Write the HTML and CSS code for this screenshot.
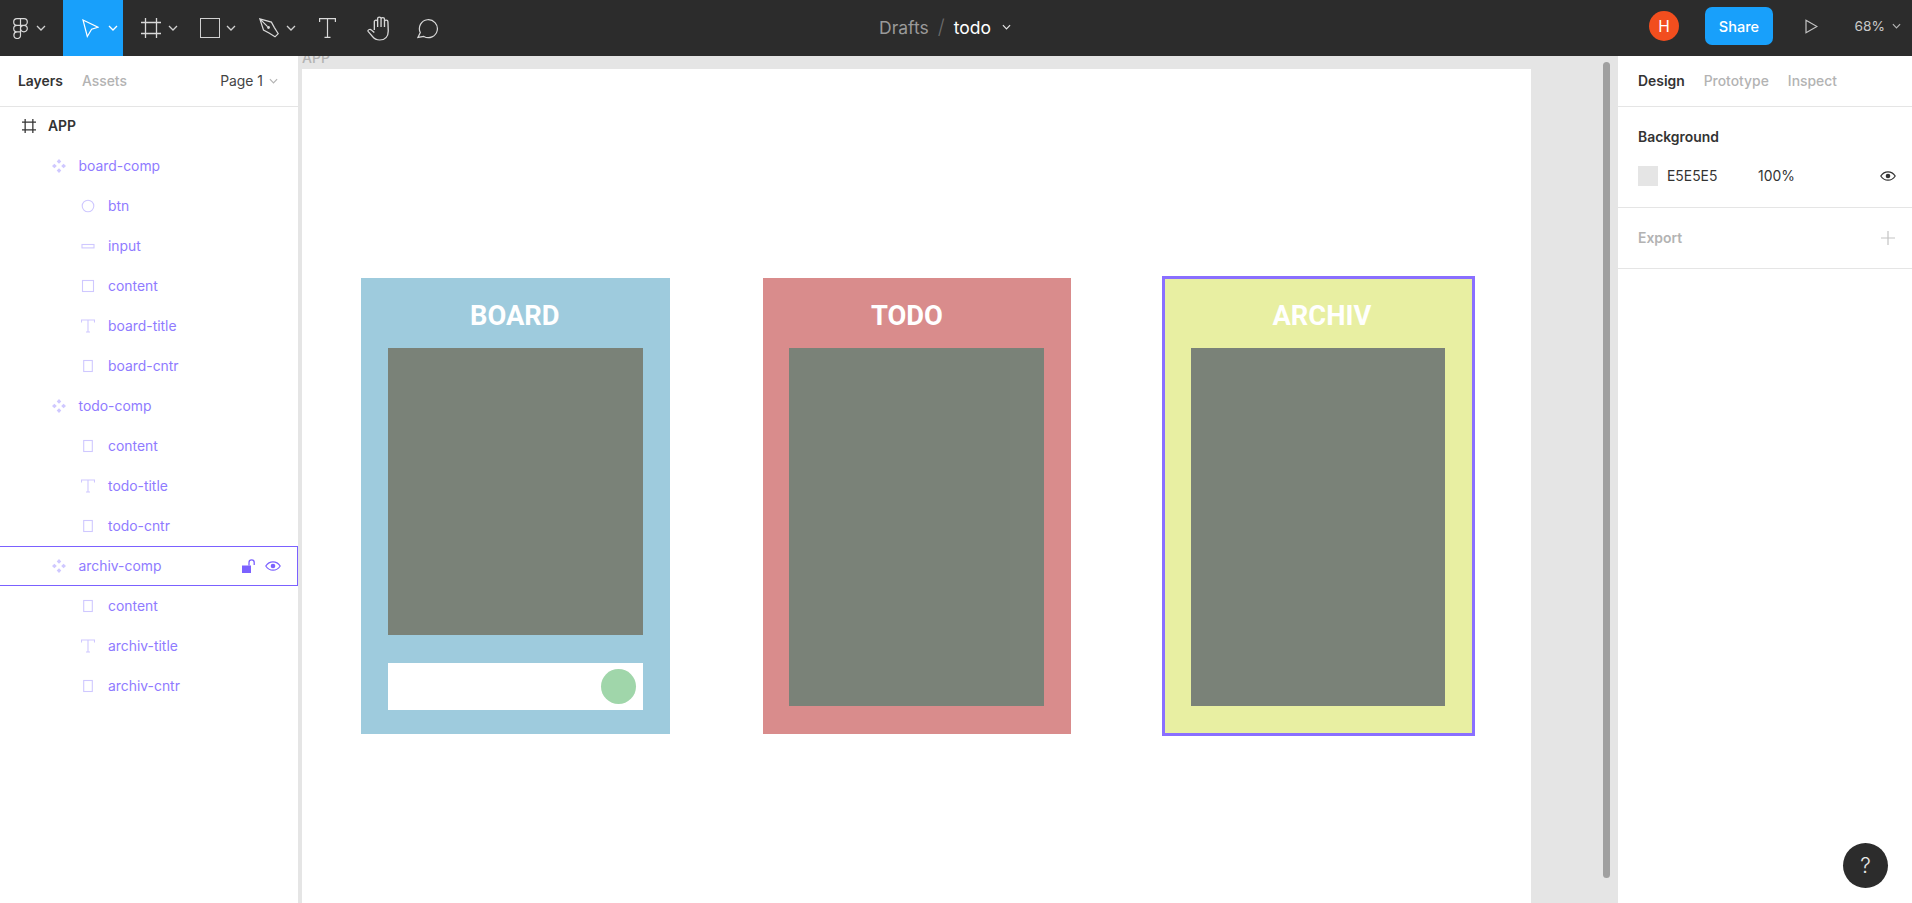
FILE: index.html
```html
<!DOCTYPE html>
<html lang="en">
<head>
<meta charset="utf-8">
<title>todo – Figma</title>
<link rel="stylesheet" href="styles.css">
</head>
<body>
<svg class="defs" width="0" height="0" aria-hidden="true">
  <defs>
    <symbol id="chev" viewBox="0 0 10 6"><path d="M1 1l4 4 4-4" fill="none" stroke="currentColor" stroke-width="1.3"/></symbol>
    <symbol id="i-frame" viewBox="0 0 20 20"><path d="M4.500 0v20M15.500 0v20M0 4.500h20M0 15.500h20" fill="none" stroke="currentColor"/></symbol>
    <symbol id="i-comp" viewBox="0 0 14 14"><path d="M7 0l2.300 2.400L7 4.800 4.700 2.400zM7 9.200l2.300 2.400L7 14l-2.300-2.400zM2.400 4.700L4.800 7 2.400 9.300 0 7zM11.600 4.700L14 7l-2.400 2.300L9.200 7z" fill="#cfc8ff"/></symbol>
    <symbol id="i-ellipse" viewBox="0 0 14 14"><circle cx="7" cy="7" r="5.800" fill="none" stroke="#cfc8ff" stroke-width="1.100"/></symbol>
    <symbol id="i-input" viewBox="0 0 14 14"><rect x="1" y="5.500" width="12" height="3.400" fill="none" stroke="#cfc8ff" stroke-width="1.100"/></symbol>
    <symbol id="i-rect" viewBox="0 0 14 14"><rect x="1.500" y="1.500" width="11" height="11" fill="none" stroke="#cfc8ff" stroke-width="1.100"/></symbol>
    <symbol id="i-tall" viewBox="0 0 14 14"><rect x="2.700" y="1.500" width="8.600" height="11" fill="none" stroke="#cfc8ff" stroke-width="1.100"/></symbol>
    <symbol id="i-text" viewBox="0 0 14 14"><path d="M.5 3.500V1h13v2.500M7 1v12M5 13h4" fill="none" stroke="#cfc8ff" stroke-width="1.100"/></symbol>
    <symbol id="i-eye" viewBox="0 0 16 10"><path d="M.8 5C2.600 2.200 5 .8 8 .8s5.400 1.400 7.200 4.200C13.400 7.800 11 9.200 8 9.200S2.600 7.800.8 5z" fill="none" stroke="currentColor" stroke-width="1.200"/><circle cx="8" cy="5" r="2.300" fill="currentColor"/></symbol>
  </defs>
</svg>
<div class="app">
  <header class="topbar">
    <div class="tools">
      <div class="tool tool-logo">
        <svg class="ico-logo" viewBox="0 0 15 21"><path d="M7.500.7H4A3.300 3.300 0 0 0 4 7.300h3.500zM7.500.7H11a3.300 3.300 0 0 1 0 6.600H7.500zM7.500 7.300H4a3.300 3.300 0 0 0 0 6.600h3.500zM14.300 10.600a3.400 3.300 0 1 1-6.800 0 3.400 3.300 0 0 1 6.800 0zM7.500 13.900H4a3.300 3.300 0 1 0 3.500 3.300z" fill="none" stroke="#d9d9d9" stroke-width="1.200"/></svg>
        <svg class="chev"><use href="#chev"/></svg>
      </div>
      <div class="tool tool-active">
        <svg class="ico-arrow" viewBox="0 0 17 19"><path d="M1 1l15 7.200-6.400 2.100L5.300 17.500z" fill="none" stroke="#fff" stroke-width="1.200"/></svg>
        <svg class="chev"><use href="#chev"/></svg>
      </div>
      <div class="tool tool-frame">
        <svg class="ico-20"><use href="#i-frame"/></svg>
        <svg class="chev"><use href="#chev"/></svg>
      </div>
      <div class="tool tool-rect">
        <span class="rect-shape"></span>
        <svg class="chev"><use href="#chev"/></svg>
      </div>
      <div class="tool tool-pen">
        <svg class="ico-20" viewBox="0 0 20 20"><path d="M.8.8l11.600 3.300 3 5.500 3.800 6-3.200 3.200-6-3.800-5.500-3L.8.8zM.8.8l7.800 7.800" fill="none" stroke="#d9d9d9" stroke-width="1.200"/><circle cx="9.500" cy="9.500" r="1.400" fill="#d9d9d9"/></svg>
        <svg class="chev"><use href="#chev"/></svg>
      </div>
      <div class="tool tool-text">
        <svg class="ico-t" viewBox="0 0 17 20"><path d="M.6 4V.7h15.800V4M8.500.7v18.600M5.500 19.300h6" fill="none" stroke="#d9d9d9" stroke-width="1.200"/></svg>
      </div>
      <div class="tool tool-hand">
        <svg class="ico-hand" viewBox="0 0 18 25" preserveAspectRatio="none"><path d="M6 14V5.500a1.300 1.300 0 0 1 2.700 0V11M8.700 11V2.500a1.400 1.400 0 0 1 2.800 0V11M11.500 11V3a1.400 1.400 0 0 1 2.800 0v8M14.300 11V5.500a1.400 1.400 0 0 1 2.800 0l.3 9.500c0 5.500-2.700 9-7 9-3.300 0-4.800-1.700-6-3.600L1 15.500c-.8-1.600 1.500-3 2.700-1.300L6 16.500" fill="none" stroke="#d9d9d9" stroke-width="1.100"/></svg>
      </div>
      <div class="tool tool-comment">
        <svg class="ico-comment" viewBox="0 0 22 21"><path d="M3.300 14.600A9 9 0 1 1 6.800 18.400L1 19.400z" fill="none" stroke="#d9d9d9" stroke-width="1.200"/></svg>
      </div>
    </div>
    <div class="doc">
      <span class="doc-folder">Drafts</span>
      <span class="doc-sep">/</span>
      <span class="doc-name">todo</span>
      <svg class="chev chev-doc"><use href="#chev"/></svg>
    </div>
    <div class="actions">
      <span class="avatar">H</span>
      <span class="share">Share</span>
      <svg class="ico-play" viewBox="0 0 13 15"><path d="M1 1.200L12 7.500 1 13.800z" fill="none" stroke="#c4c4c4" stroke-width="1.200"/></svg>
      <span class="zoom-val">68%</span>
      <svg class="chev chev-zoom"><use href="#chev"/></svg>
    </div>
  </header>

  <main class="main">
    <aside class="left">
      <div class="panel-head">
        <span class="tab tab-on">Layers</span>
        <span class="tab tab-off">Assets</span>
        <span class="page">Page 1</span>
        <svg class="chev chev-page"><use href="#chev"/></svg>
      </div>
      <ul class="layers">
        <li class="row row-frame"><svg class="lico lico-frame"><use href="#i-frame"/></svg><span>APP</span></li>
        <li class="row lvl1"><svg class="lico"><use href="#i-comp"/></svg><span>board-comp</span></li>
        <li class="row lvl2"><svg class="lico"><use href="#i-ellipse"/></svg><span>btn</span></li>
        <li class="row lvl2"><svg class="lico"><use href="#i-input"/></svg><span>input</span></li>
        <li class="row lvl2"><svg class="lico"><use href="#i-rect"/></svg><span>content</span></li>
        <li class="row lvl2"><svg class="lico"><use href="#i-text"/></svg><span>board-title</span></li>
        <li class="row lvl2"><svg class="lico"><use href="#i-tall"/></svg><span>board-cntr</span></li>
        <li class="row lvl1"><svg class="lico"><use href="#i-comp"/></svg><span>todo-comp</span></li>
        <li class="row lvl2"><svg class="lico"><use href="#i-tall"/></svg><span>content</span></li>
        <li class="row lvl2"><svg class="lico"><use href="#i-text"/></svg><span>todo-title</span></li>
        <li class="row lvl2"><svg class="lico"><use href="#i-tall"/></svg><span>todo-cntr</span></li>
        <li class="row lvl1 row-hover"><svg class="lico"><use href="#i-comp"/></svg><span>archiv-comp</span>
          <svg class="ico-lock" viewBox="0 0 14 15"><path d="M0 6.500h9V14H0z" fill="#7b61ff"/><path d="M7 6.500V3.500a2.600 2.600 0 0 1 5.200 0V6" fill="none" stroke="#7b61ff" stroke-width="1.300"/></svg>
          <svg class="ico-eye-row"><use href="#i-eye"/></svg>
        </li>
        <li class="row lvl2"><svg class="lico"><use href="#i-tall"/></svg><span>content</span></li>
        <li class="row lvl2"><svg class="lico"><use href="#i-text"/></svg><span>archiv-title</span></li>
        <li class="row lvl2"><svg class="lico"><use href="#i-tall"/></svg><span>archiv-cntr</span></li>
      </ul>
    </aside>

    <section class="canvas">
      <span class="frame-label">APP</span>
      <div class="frame">
        <article class="card card-board">
          <h2 class="card-title">BOARD</h2>
          <div class="content content-short"></div>
          <div class="input"><span class="btn"></span></div>
        </article>
        <article class="card card-todo">
          <h2 class="card-title">TODO</h2>
          <div class="content content-tall"></div>
        </article>
        <article class="card card-archiv">
          <h2 class="card-title">ARCHIV</h2>
          <div class="content content-tall"></div>
        </article>
      </div>
      <span class="scrollbar"></span>
    </section>

    <aside class="right">
      <div class="panel-head">
        <span class="tab tab-on">Design</span>
        <span class="tab tab-off tab-proto">Prototype</span>
        <span class="tab tab-off tab-inspect">Inspect</span>
      </div>
      <div class="section section-bg">
        <h3 class="section-title">Background</h3>
        <div class="fill">
          <span class="swatch"></span>
          <span class="hex">E5E5E5</span>
          <span class="pct">100%</span>
          <svg class="ico-eye-fill"><use href="#i-eye"/></svg>
        </div>
      </div>
      <div class="section section-export">
        <h3 class="section-title section-muted">Export</h3>
        <svg class="ico-plus" viewBox="0 0 14 14"><path d="M7 0v14M0 7h14" stroke="#c4c4c4" stroke-width="1.200" fill="none"/></svg>
      </div>
      <button class="help">?</button>
    </aside>
  </main>
</div>
</body>
</html>
```
FILE: styles.css
```css
* { box-sizing: border-box; }
html, body { margin: 0; height: 100%; overflow: hidden; }
body { font-family: Inter, "Liberation Sans", sans-serif; font-size: 13.900px; color: #333; background: #e5e5e5; }
.defs { position: absolute; }
.app { display: flex; flex-direction: column; height: 903px; }

/* top bar */
.topbar { position: relative; flex: none; height: 56px; background: #2c2c2c; display: flex; align-items: flex-start; justify-content: space-between; color: #d9d9d9; }
.tools { display: flex; height: 56px; }
.tool { display: flex; align-items: center; height: 56px; flex: none; }
.chev { width: 10px; height: 6px; color: #d0d0d0; flex: none; }
.tool-logo { width: 63px; padding-left: 13px; gap: 8px; }
.ico-logo { width: 15px; height: 21px; }
.tool-active { width: 60px; background: #18a0fb; padding-left: 19px; }
.tool-active .chev { color: #fff; margin-left: 9px; }
.ico-arrow { width: 17px; height: 19px; }
.tool-frame { width: 60px; padding-left: 18px; }
.tool-rect { width: 60px; padding-left: 16px; }
.tool-pen { width: 60px; padding-left: 16px; }
.ico-20 { width: 20px; height: 20px; color: #d9d9d9; flex: none; stroke-width: 1.300; }
.tool-frame .chev, .tool-rect .chev, .tool-pen .chev { margin-left: 7px; }
.rect-shape { width: 20px; height: 20px; margin-left: 1px; border: 1.300px solid #d0d0d0; flex: none; }
.tool-rect .chev { margin-left: 6px; }
.tool-text { width: 48px; padding-left: 16px; }
.ico-t { width: 17px; height: 20px; }
.tool-hand { width: 50px; padding-left: 16px; }
.ico-hand { width: 22px; height: 25px; }
.tool-comment { width: 40px; padding-left: 16px; box-sizing: content-box; }
.ico-comment { width: 22px; height: 21px; }

.doc { position: absolute; left: 879px; top: 0; height: 54px; display: flex; align-items: center; font-size: 17.500px; }
.doc-folder { color: #9a9a9a; }
.doc-sep { color: #6b6b6b; margin: 0 9px; font-size: 20px; font-weight: 300; }
.doc-name { color: #fff; }
.chev-doc { margin-left: 11px; color: #e6e6e6; width: 9px; }

.actions { display: flex; align-items: center; height: 52px; padding-right: 11px; }
.avatar { width: 30px; height: 30px; border-radius: 50%; background: #f24e1e; color: #fff; display: flex; align-items: center; justify-content: center; font-size: 15.500px; }
.share { width: 68px; height: 38px; margin-left: 26px; background: #18a0fb; border-radius: 7px; color: #fff; font-weight: 500; display: flex; align-items: center; justify-content: center; font-size: 14.500px; }
.ico-play { width: 13px; height: 15px; margin-left: 32px; }
.zoom-val { margin-left: 36.500px; color: #c9c9c9; font-size: 13.750px; }
.chev-zoom { margin-left: 7px; color: #b5b5b5; width: 9px; }

/* main */
.main { flex: 1; display: flex; min-height: 0; }
.left { width: 302px; flex: none; background: #fff; border-right: 4px solid #e5e5e5; }
.right { position: relative; width: 294px; flex: none; background: #fff; }
.panel-head { display: flex; align-items: center; height: 51px; border-bottom: 1.500px solid #e5e5e5; padding-left: 18px; padding-bottom: 1px; font-size: 13.900px; }
.right .panel-head { padding-left: 20px; }
.tab { font-weight: 600; }
.tab-on { color: #333; }
.tab-off { color: #b3b3b3; margin-left: 19px; font-weight: 500; }
.page { margin-left: auto; color: #444; }
.chev-page { margin: 0 20px 0 6px; color: #b3b3b3; width: 9px; }

.layers { list-style: none; margin: -1px 0 0; padding: 0; }
.row { position: relative; display: flex; align-items: center; height: 40px; color: #8f7bff; font-size: 13.900px; }
.row-frame { padding-left: 22px; color: #333; font-weight: 600; }
.lico { width: 14px; height: 14px; flex: none; margin-right: 13px; }
.lico-frame { margin-right: 12px; color: #333; stroke-width: 1.800; }
.lvl1 { padding-left: 52px; }
.lvl2 { padding-left: 81px; }
.lvl1 .lico { margin-right: 12.500px; }
.row-hover { border: 1px solid #7b61ff; border-left: 0; }
.ico-lock { width: 14px; height: 15px; margin-left: auto; }
.ico-eye-row { width: 16px; height: 10px; margin: 0 16px 0 9px; color: #7b61ff; }

/* canvas */
.canvas { position: relative; flex: 1; min-width: 0; overflow: hidden; background: #e5e5e5; padding-top: 13px; }
.frame-label { position: absolute; left: 0; top: -6px; color: #b3b3b3; font-size: 14px; font-weight: 500; line-height: 16px; }
.frame { width: 1229px; height: 100%; background: #fff; padding: 209px 0 0 59px; display: flex; align-items: flex-start; gap: 93px; }
.scrollbar { position: absolute; left: 1301px; top: 6px; width: 7px; height: 816px; border-radius: 4px; background: #a0a0a0; }

.card { width: 308px; height: 456px; flex: none; padding-left: 26px; }
.card-board { background: #9ecbdd; width: 309px; padding-left: 27px; }
.card-todo { background: #d98c8c; }
.card-archiv { background: #e8efa2; width: 307px; height: 454px; margin: 1px 0 0 1px; outline: 3px solid #8a6fff; }
.card-title { margin: 0; height: 70px; padding: 19px 0 0 82px; font: 700 27.300px/38px Roboto, "Liberation Sans", sans-serif; color: #fff; }
.card-archiv .card-title { height: 69px; padding: 18px 0 0 81.500px; }
.content { background: #7a8278; width: 255px; }
.content-short { height: 287px; }
.content-tall { height: 358px; }
.card-archiv .content { width: 254px; }
.input { position: relative; width: 255px; height: 47px; margin-top: 28px; background: #fff; display: flex; align-items: center; justify-content: flex-end; padding-right: 7px; }
.btn { width: 35px; height: 35px; border-radius: 50%; background: #a0d6aa; }

/* right panel */
.section { border-bottom: 1.500px solid #e5e5e5; padding: 0 20px; }
.section-bg { height: 101px; }
.section-title { margin: 0; font-size: 13.900px; font-weight: 600; color: #333; line-height: 17px; }
.section-bg .section-title { padding-top: 22px; }
.section-muted { color: #b3b3b3; }
.fill { display: flex; align-items: center; margin-top: 20px; height: 20px; }
.swatch { width: 20px; height: 20px; background: #e5e5e5; }
.hex { margin-left: 9px; width: 91px; }
.pct { width: 100px; }
.ico-eye-fill { width: 16px; height: 10px; margin-left: auto; margin-right: -4px; color: #333; }
.section-export { height: 61px; display: flex; align-items: center; justify-content: space-between; }
.ico-plus { width: 14px; height: 14px; margin-right: -3px; }
.help { position: absolute; left: 225px; top: 787px; width: 45px; height: 45px; border: 0; padding: 0; border-radius: 50%; background: #2c2c2c; color: #e8e8e8; font: 300 21px Inter, sans-serif; }
```
